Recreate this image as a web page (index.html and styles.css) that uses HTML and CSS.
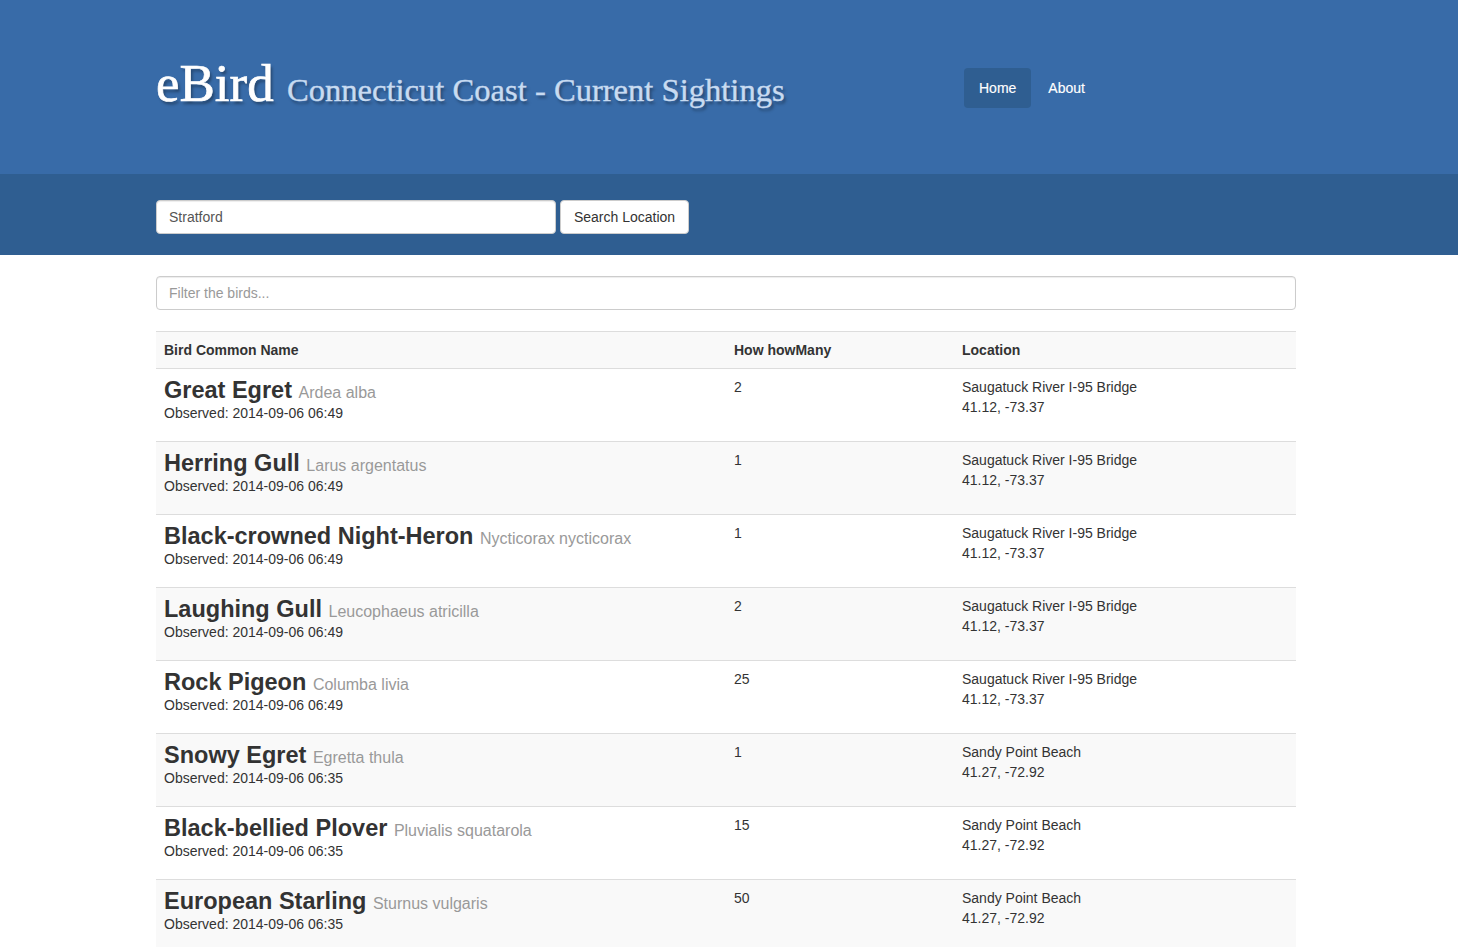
FILE: index.html
```html
<!DOCTYPE html>
<html lang="en">
<head>
<meta charset="utf-8">
<title>eBird Connecticut Coast - Current Sightings</title>
<link rel="stylesheet" href="styles.css">
</head>
<body>
<header class="masthead">
  <div class="container masthead-inner">
    <h1 class="brand">eBird <span class="brand-sub">Connecticut Coast - Current Sightings</span></h1>
    <ul class="nav">
      <li class="nav-item active"><a href="#">Home</a></li>
      <li class="nav-item"><a href="#">About</a></li>
    </ul>
  </div>
</header>
<section class="searchbar">
  <div class="container search-inner">
    <input class="form-control location-input" type="text" value="Stratford">
    <button class="btn" type="button">Search Location</button>
  </div>
</section>
<main class="container main">
  <input class="form-control filter-input" type="text" placeholder="Filter the birds...">
  <table class="table">
    <colgroup>
      <col class="col-name">
      <col class="col-count">
      <col class="col-loc">
    </colgroup>
    <thead>
      <tr><th>Bird Common Name</th><th>How howMany</th><th>Location</th></tr>
    </thead>
    <tbody>
      <tr>
        <td><div class="bird"><span class="common">Great Egret</span> <span class="sci">Ardea alba</span></div><div class="obs">Observed: 2014-09-06 06:49</div></td>
        <td>2</td>
        <td>Saugatuck River I-95 Bridge<br>41.12, -73.37</td>
      </tr>
      <tr>
        <td><div class="bird"><span class="common">Herring Gull</span> <span class="sci">Larus argentatus</span></div><div class="obs">Observed: 2014-09-06 06:49</div></td>
        <td>1</td>
        <td>Saugatuck River I-95 Bridge<br>41.12, -73.37</td>
      </tr>
      <tr>
        <td><div class="bird"><span class="common">Black-crowned Night-Heron</span> <span class="sci">Nycticorax nycticorax</span></div><div class="obs">Observed: 2014-09-06 06:49</div></td>
        <td>1</td>
        <td>Saugatuck River I-95 Bridge<br>41.12, -73.37</td>
      </tr>
      <tr>
        <td><div class="bird"><span class="common">Laughing Gull</span> <span class="sci">Leucophaeus atricilla</span></div><div class="obs">Observed: 2014-09-06 06:49</div></td>
        <td>2</td>
        <td>Saugatuck River I-95 Bridge<br>41.12, -73.37</td>
      </tr>
      <tr>
        <td><div class="bird"><span class="common">Rock Pigeon</span> <span class="sci">Columba livia</span></div><div class="obs">Observed: 2014-09-06 06:49</div></td>
        <td>25</td>
        <td>Saugatuck River I-95 Bridge<br>41.12, -73.37</td>
      </tr>
      <tr>
        <td><div class="bird"><span class="common">Snowy Egret</span> <span class="sci">Egretta thula</span></div><div class="obs">Observed: 2014-09-06 06:35</div></td>
        <td>1</td>
        <td>Sandy Point Beach<br>41.27, -72.92</td>
      </tr>
      <tr>
        <td><div class="bird"><span class="common">Black-bellied Plover</span> <span class="sci">Pluvialis squatarola</span></div><div class="obs">Observed: 2014-09-06 06:35</div></td>
        <td>15</td>
        <td>Sandy Point Beach<br>41.27, -72.92</td>
      </tr>
      <tr>
        <td><div class="bird"><span class="common">European Starling</span> <span class="sci">Sturnus vulgaris</span></div><div class="obs">Observed: 2014-09-06 06:35</div></td>
        <td>50</td>
        <td>Sandy Point Beach<br>41.27, -72.92</td>
      </tr>
    </tbody>
  </table>
</main>
</body>
</html>
```
FILE: styles.css
```css
html, body {
  margin: 0;
  padding: 0;
}
body {
  font-family: "Liberation Sans", Arial, Helvetica, sans-serif;
  font-size: 14px;
  line-height: 20px;
  color: #333;
  background: #fff;
}
.container {
  width: 1140px;
  margin-left: calc(50% - 573px);
}

/* Header */
.masthead {
  background: #386ba8;
  height: 174px;
  box-sizing: border-box;
}
.masthead-inner {
  display: flex;
  align-items: flex-start;
  padding-top: 53px;
}
.brand {
  margin: 0;
  width: 808px;
  font-family: "Liberation Serif", "Times New Roman", serif;
  font-weight: normal;
  font-size: 53px;
  line-height: 60px;
  color: #fff;
  -webkit-text-stroke: 0.7px #fff;
  text-shadow: 2px 3px 3px rgba(0, 0, 0, 0.35);
  white-space: nowrap;
}
.brand-sub {
  font-size: 32.6px;
  color: #c8dbf1;
  -webkit-text-stroke: 0.4px #c8dbf1;
  text-shadow: 2px 3px 3px rgba(0, 0, 0, 0.35);
}
.nav {
  list-style: none;
  margin: 15px 0 0;
  padding: 0;
  display: flex;
  gap: 2px;
}
.nav-item a {
  display: block;
  padding: 10px 15px;
  border-radius: 4px;
  color: #fff;
  text-decoration: none;
  font-size: 14px;
  line-height: 20px;
  -webkit-text-stroke: 0.15px #fff;
}
.nav-item.active a {
  background: #2f5e91;
}

/* Search band */
.searchbar {
  background: #2f5e91;
  height: 81px;
  box-sizing: border-box;
  padding-top: 26px;
}
.search-inner {
  display: flex;
  gap: 4px;
}
.form-control {
  box-sizing: border-box;
  height: 34px;
  padding: 6px 12px;
  font-family: inherit;
  font-size: 14px;
  line-height: 20px;
  color: #555;
  background: #fff;
  border: 1px solid #ccc;
  border-radius: 4px;
  box-shadow: inset 0 1px 1px rgba(0, 0, 0, 0.075);
  outline: none;
}
.location-input {
  width: 400px;
}
.btn {
  box-sizing: border-box;
  height: 34px;
  width: 129px;
  padding: 6px 12px;
  font-family: inherit;
  font-size: 14px;
  line-height: 20px;
  color: #333;
  background: #fff;
  border: 1px solid #ccc;
  border-radius: 4px;
}

/* Main */
.main {
  padding-top: 21px;
}
.filter-input {
  display: block;
  width: 100%;
}
.filter-input::placeholder {
  color: #999;
}
.table {
  width: 100%;
  margin-top: 21px;
  border-collapse: collapse;
  table-layout: fixed;
}
.col-name { width: 570px; }
.col-count { width: 228px; }
.col-loc { width: 342px; }
.table th {
  text-align: left;
  font-weight: bold;
  padding: 8px;
  line-height: 20px;
  background: #f9f9f9;
  border-top: 1px solid #ddd;
  border-bottom: 1px solid #ddd;
}
.table td {
  vertical-align: top;
  padding: 8px 8px 18px;
  line-height: 20px;
  border-top: 1px solid #ddd;
}
.table tbody tr:nth-child(even) td {
  background: #f9f9f9;
}
.table tbody tr:first-child td {
  border-top: 0;
}
.bird {
  font-size: 23.5px;
  line-height: 26px;
  height: 26px;
  white-space: nowrap;
}
.common {
  font-weight: bold;
  color: #333;
  line-height: 1;
}
.sci {
  font-size: 16px;
  color: #999;
  line-height: 1;
}
.obs {
  font-size: 14px;
  line-height: 20px;
}
```
